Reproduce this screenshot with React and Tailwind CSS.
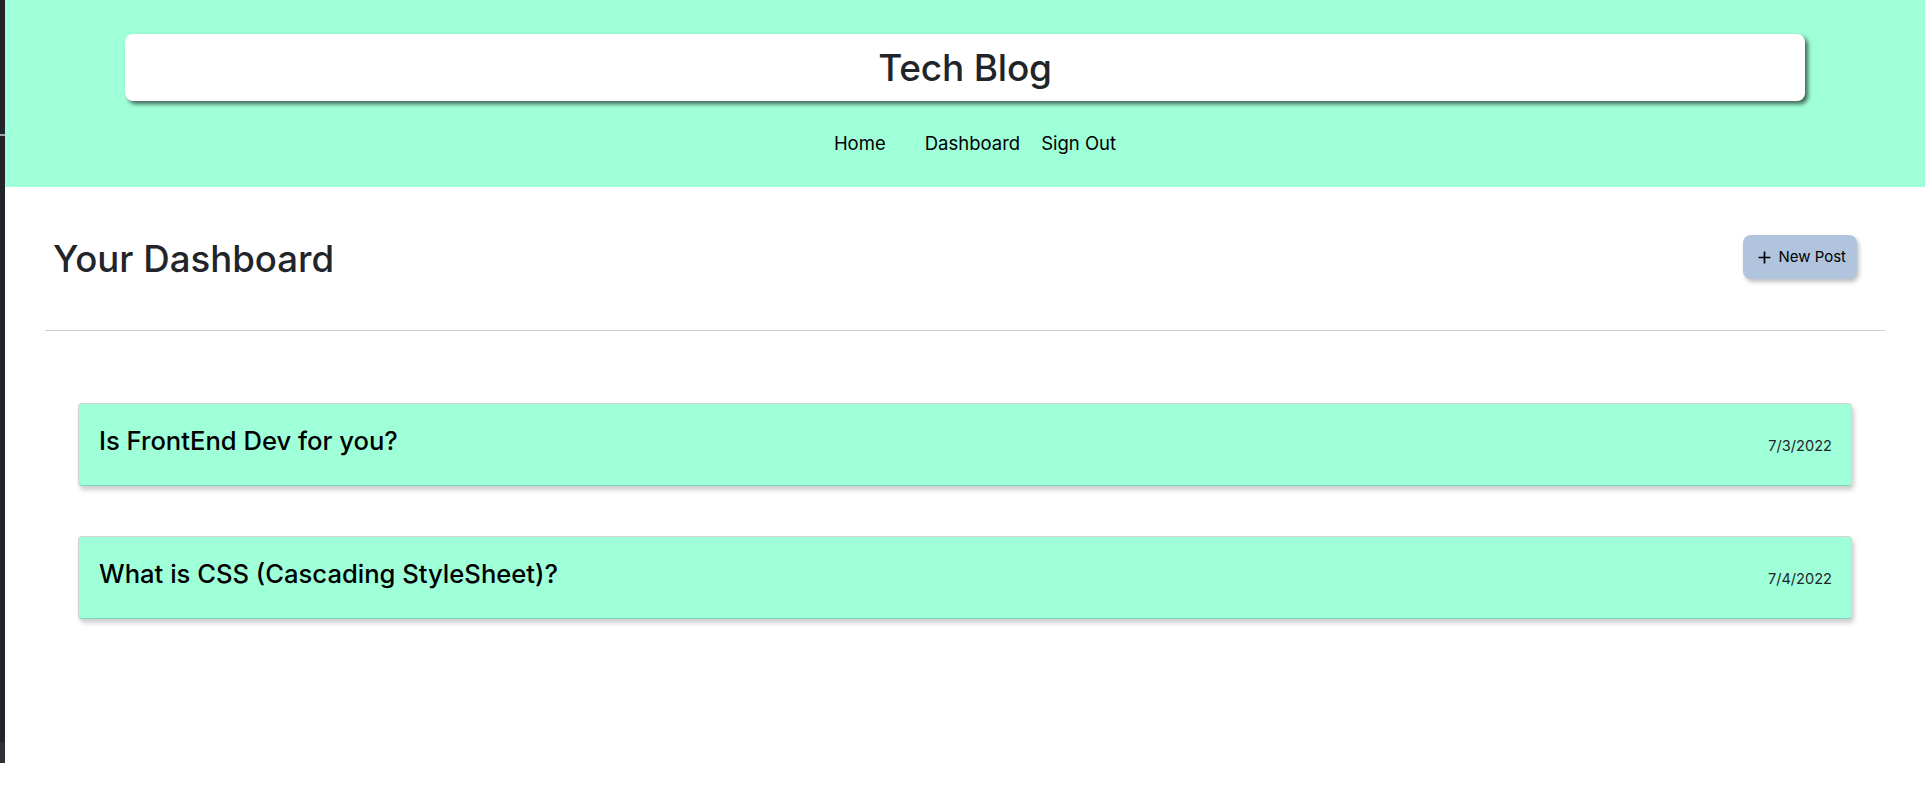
const posts = [
  { id: 1, title: "Is FrontEnd Dev for you?", date: "7/3/2022" },
  { id: 2, title: "What is CSS (Cascading StyleSheet)?", date: "7/4/2022" },
];

function PostCard({ post }) {
  return (
    <article className="flex h-[83px] items-center justify-between rounded-[4px] border border-[#d4d4d4] border-b-[#7ed9b8] bg-[#9fffd9] pl-[20px] pr-[19px] shadow-[2px_4px_5px_rgba(0,0,0,0.2)]">
      <h3 className="-mt-[6px] text-[25.6px] font-medium text-black">{post.title}</h3>
      <span className="mt-[4px] text-[14.6px] text-[#212529]">{post.date}</span>
    </article>
  );
}

export default function App() {
  return (
    <div className="bg-white font-['Inter',sans-serif] text-[#212529]">
      <div className="flex h-[763px]">
        <div className="relative w-[5px] shrink-0 bg-[#212529]">
          <div className="absolute left-0 top-[134px] h-[2px] w-[5px] bg-[#9aa4b4]" />
          <div className="absolute bottom-0 left-0 h-[21px] w-[5px] bg-[#2d3036]" />
        </div>
        <div className="min-w-0 flex-1">
          <header className="h-[187px] bg-[#9fffd9] px-[120px] pt-[34px]">
            <div className="flex h-[67px] items-center justify-center rounded-[8px] bg-white shadow-[3px_3px_4px_rgba(0,0,0,0.6)]">
              <h1 className="text-[37px] font-medium leading-none tracking-[-0.2px]">Tech Blog</h1>
            </div>
            <nav className="mt-[33px] flex justify-center pl-[20px] text-[18.5px] leading-none text-black">
              <a href="#">Home</a>
              <a href="#" className="ml-[39px]">Dashboard</a>
              <a href="#" className="ml-[21px]">Sign Out</a>
            </nav>
          </header>

          <main className="px-[40px]">
            <div className="flex items-center justify-between pb-[51px] pl-[8px] pr-[28px] pt-[52px]">
              <h2 className="text-[36.6px] font-medium leading-none">Your Dashboard</h2>
              <button className="-mt-[4px] flex h-[44px] items-center gap-[7px] rounded-[8px] bg-[#b0c4de] pl-[15px] pr-[11px] text-[15px] text-black shadow-[2px_3px_4px_rgba(0,0,0,0.25)]">
                <svg width="13" height="13" viewBox="0 0 12 12" fill="none" stroke="currentColor" strokeWidth="1.6">
                  <path d="M6 0.5v11M0.5 6h11" />
                </svg>
                New Post
              </button>
            </div>
            <hr className="border-0 border-t border-[#cfcfcf]" />
            <section className="flex flex-col gap-[50px] px-[33px] pt-[72px]">
              {posts.map((p) => (
                <PostCard key={p.id} post={p} />
              ))}
            </section>
          </main>
        </div>
      </div>
      <div className="h-[26px] bg-white" />
    </div>
  );
}
